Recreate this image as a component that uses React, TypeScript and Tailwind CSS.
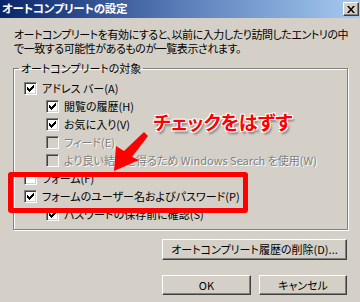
import React from 'react';

const FONT = "font-['MS_UI_Gothic','Noto_Sans_CJK_JP',sans-serif]";

const Check = ({ on = false, disabled = false }: { on?: boolean; disabled?: boolean }) => (
  <span
    className={`relative inline-block w-[13px] h-[13px] shrink-0 border border-t-[#808080] border-l-[#808080] border-b-white border-r-white shadow-[inset_1px_1px_#404040,inset_-1px_-1px_#d4d0c8] ${
      disabled ? 'bg-[#d4d0c8]' : 'bg-white'
    }`}
  >
    {on && (
      <svg viewBox="0 0 11 11" className="absolute left-0 top-0 w-[11px] h-[11px]">
        <path d="M2 4h1v1h1v1h1V5h1V4h1V3h1V2h1v3H8v1H7v1H6v1H5v1H4V8H3V7H2z" fill="#000" />
      </svg>
    )}
  </span>
);

const Row = ({
  label,
  on,
  disabled,
  indent,
}: {
  label: string;
  on?: boolean;
  disabled?: boolean;
  indent?: boolean;
}) => (
  <div className={`flex items-center h-[18px] gap-[5px] ${indent ? 'pl-[32px]' : 'pl-[10px]'}`}>
    <Check on={on} disabled={disabled} />
    <span
      className={`text-[11px] leading-none whitespace-nowrap ${
        disabled ? 'text-[#808080] [text-shadow:1px_1px_#fff]' : 'text-black'
      }`}
    >
      {label}
    </span>
  </div>
);

const Button = ({ children, className = '' }: { children: React.ReactNode; className?: string }) => (
  <div
    className={`flex items-center justify-center text-[11px] text-black border border-t-white border-l-white border-b-[#404040] border-r-[#404040] shadow-[inset_-1px_-1px_#808080] bg-[#d4d0c8] ${className}`}
  >
    {children}
  </div>
);

export default function App() {
  return (
    <div className={`relative w-[360px] h-[302px] overflow-hidden bg-[#d4d0c8] ${FONT} [font-feature-settings:'palt']`}>
      {/* Title bar */}
      <div className="flex items-center justify-between h-[18px] pl-[2px] pr-[1px] bg-gradient-to-r from-[#0a246a] via-[#5a7db8] to-[#a6caf0]">
        <span className="text-white font-bold text-[11.5px] leading-none tracking-[-0.3px]">オートコンプリートの設定</span>
        <div className="flex items-center justify-center w-[16px] h-[14px] bg-[#d4d0c8] border border-t-white border-l-white border-b-[#404040] border-r-[#404040] shadow-[inset_-1px_-1px_#808080]">
          <svg viewBox="0 0 8 7" className="w-[8px] h-[7px]">
            <path d="M0 0h2l2 2.5L6 0h2L5 3.5 8 7H6L4 4.5 2 7H0l3-3.5z" fill="#000" />
          </svg>
        </div>
      </div>

      {/* Body */}
      <div className="flex flex-col px-[13px]">
        <p className="mt-[9px] ml-[1px] text-[11px] leading-[14px] text-black tracking-[-0.45px] whitespace-nowrap">
          オートコンプリートを有効にすると、以前に入力したり訪問したエントリの中
          <br />
          で一致する可能性があるものが一覧表示されます。
        </p>

        <fieldset className="mt-[7px] mr-[-1px] border border-[#808080] shadow-[1px_1px_#fff,inset_1px_1px_#fff] pb-[6px] pt-[5px]">
          <legend className="ml-[5px] px-[2px] text-[11px] leading-[12px] text-black">オートコンプリートの対象</legend>
          <Row label="アドレス バー(A)" on />
          <Row label="閲覧の履歴(H)" on indent />
          <Row label="お気に入り(V)" on indent />
          <Row label="フィード(E)" disabled indent />
          <Row label="より良い結果を得るため Windows Search を使用(W)" disabled indent />
          <Row label="フォーム(F)" />
          <Row label="フォームのユーザー名およびパスワード(P)" on />
          <Row label="パスワードの保存前に確認(S)" on indent />
        </fieldset>

        <div className="flex justify-end mt-[9px]">
          <Button className="w-[185px] h-[21px]">オートコンプリート履歴の削除(D)...</Button>
        </div>
        <div className="flex justify-end gap-[8px] mt-[15px]">
          <Button className="w-[89px] h-[20px]">OK</Button>
          <Button className="w-[88px] h-[20px]">キャンセル</Button>
        </div>
      </div>

      {/* Annotation overlay */}
      <div className="absolute left-[8px] top-[172px] w-[240px] h-[41px] border-[5px] border-[#ff0000] rounded-[3px] pointer-events-none" />
      <svg className="absolute left-0 top-0 w-[360px] h-[302px] pointer-events-none" viewBox="0 0 360 302">
        <polygon
          points="114,171 116,146 124,151 144,132 148,136 132,157 139,160"
          fill="#ff0000"
        />
      </svg>
      <div className="absolute left-[153px] top-[112px] text-[19px] leading-none font-bold text-[#ff0000] [text-shadow:-1px_-1px_0_#fff,1px_-1px_0_#fff,-1px_1px_0_#fff,1px_1px_0_#fff,2px_3px_2px_#888] font-['Noto_Sans_CJK_JP',sans-serif]">
        チェックをはずす
      </div>
    </div>
  );
}
